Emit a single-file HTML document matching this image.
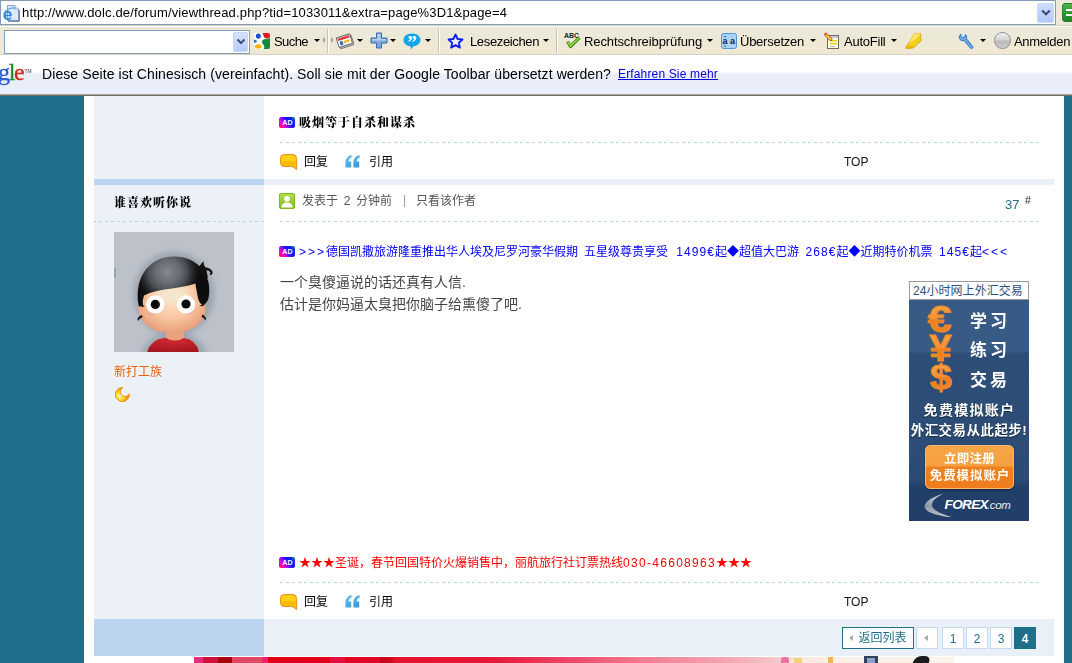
<!DOCTYPE html>
<html lang="zh-CN">
<head>
<meta charset="utf-8">
<title>viewthread</title>
<style>
*{box-sizing:border-box;margin:0;padding:0}
html,body{width:1072px;height:663px;overflow:hidden;background:#fff}
body{position:relative;font-family:"Liberation Sans","Noto Sans CJK SC",sans-serif;font-size:12px;color:#000}
.abs{position:absolute}
.nw{white-space:nowrap}
/* ---------- browser chrome ---------- */
#chrome{position:absolute;left:0;top:0;width:1072px;height:96px;background:#ece9d8;z-index:10}
#addr{position:absolute;left:0;top:0;width:1056px;height:25px;background:#fff;border-top:1px solid #7f9db9;border-bottom:1px solid #7f9db9;border-right:1px solid #7f9db9;border-left:1px solid #7f9db9}
#url{position:absolute;left:21px;top:4px;letter-spacing:0.148px;font-size:13px;line-height:16px;color:#000;white-space:nowrap}
#tb{position:absolute;left:0;top:25px;width:1072px;height:30px;background:linear-gradient(#d8d2bd 0,#d8d2bd 1px,#fff 1px,#fff 2px,#ece9d8 2px,#ece9d8 13px,#eee8d5 14px,#efe8d4 29px,#d6d2c2 29px,#d6d2c2 30px)}
.tt{position:absolute;top:9px;font-size:13px;line-height:16px;white-space:nowrap;color:#000}
.dd{position:absolute;top:14px;width:0;height:0;border-left:3px solid transparent;border-right:3px solid transparent;border-top:3px solid #000}
.sep{position:absolute;top:4px;width:2px;height:24px;border-left:1px solid #c5c2b2;border-right:1px solid #fff}
#info{position:absolute;left:0;top:55px;width:1072px;height:41px;background:linear-gradient(#fff 0,#fff 17px,#f3f6fb 18px,#e9eef8 19px,#e9eef8 39px,#aca899 39px,#aca899 40px,#716f64 40px,#716f64 41px)}
/* ---------- page ---------- */
#page{position:absolute;left:0;top:96px;width:1072px;height:567px;background:#fff}
.teal{position:absolute;top:0;height:567px;background:#1f6f8b}
.lc{position:absolute;left:94px;width:170px;background:#ecf1f8}
.dash{position:absolute;height:1px;background:repeating-linear-gradient(90deg,#b4d2ee 0,#b4d2ee 3px,transparent 3px,transparent 6px)}
.t12{position:absolute;font-size:12px;line-height:14px;white-space:nowrap}

.b{letter-spacing:1px;font-weight:900;font-family:"Liberation Serif","Noto Serif CJK SC",serif}
.g{color:#555}
.top{font-size:12px;color:#111}
.pg{position:absolute;top:531px;width:22px;height:22px;border:1px solid #c4d8ef;background:#fff;color:#1f6f8b;font-size:12px;line-height:22px;text-align:center;white-space:nowrap}
.pg.cur{background:#1f6f8b;border-color:#1f6f8b;color:#fff;font-weight:bold}
.la{position:absolute;top:7px;width:0;height:0;border-top:3.5px solid transparent;border-bottom:3.5px solid transparent;border-right:4px solid #aaa}
.sg{display:inline-block;white-space:pre;vertical-align:top;overflow:visible}
.sg.r{text-align:right}
.tt,.t12,#url,#itx,#ilk,#b1,#b2,#logo,.pg,#fx span{will-change:transform}
</style>
</head>
<body>

<svg width="0" height="0" style="position:absolute">
  <defs>
    <linearGradient id="adg" gradientUnits="userSpaceOnUse" x1="0" y1="11" x2="13" y2="1"><stop offset="0" stop-color="#ff0030"/><stop offset="0.28" stop-color="#ff00c8"/><stop offset="0.55" stop-color="#5a10ff"/><stop offset="0.75" stop-color="#0a10ff"/><stop offset="1" stop-color="#1030f0"/></linearGradient>
    
    <linearGradient id="repg" x1="0" y1="0" x2="0" y2="1"><stop offset="0" stop-color="#ffd61e"/><stop offset="1" stop-color="#ffc400"/></linearGradient>
    
    <linearGradient id="quog" x1="0" y1="0" x2="1" y2="1"><stop offset="0" stop-color="#6cc0f0"/><stop offset="1" stop-color="#2f97dc"/></linearGradient>
    <linearGradient id="usrg" x1="0" y1="0" x2="0" y2="1"><stop offset="0" stop-color="#b4e04c"/><stop offset="1" stop-color="#7fbf1e"/></linearGradient>
    
    <radialGradient id="moong" gradientUnits="userSpaceOnUse" cx="5" cy="9" r="7"><stop offset="0" stop-color="#fff6c8"/><stop offset="0.45" stop-color="#ffe23a"/><stop offset="0.8" stop-color="#ffc21a"/><stop offset="1" stop-color="#f59a10"/></radialGradient>
  </defs>
</svg>
<div id="page">
  <div class="teal" style="left:0;width:84px"></div>
  <div class="teal" style="left:1064px;width:8px"></div>
  <!-- left column backgrounds -->
  <div class="lc" style="top:0;height:83px"></div>
  <div class="abs" style="left:94px;top:83px;width:170px;height:6px;background:#bbd5f1"></div>
  <div class="abs" style="left:264px;top:83px;width:790px;height:6px;background:#eaf0f8"></div>
  <div class="lc" style="top:89px;height:434px"></div>
  <div class="abs" style="left:94px;top:523px;width:170px;height:37px;background:#bbd5f1"></div>
  <div class="abs" style="left:264px;top:523px;width:790px;height:37px;background:#eaf0f8"></div>

  <!-- ============ previous post tail ============ -->
  <svg class="abs adic" style="left:279px;top:21px" width="16" height="11" viewBox="0 0 16 11"><rect x="0" y="0" width="16" height="11" rx="2.5" fill="url(#adg)"/><path d="M15.8 0.4 Q16 2 15.6 3.5 L12.5 0.2 Z" fill="#10a060" opacity="0.7"/><text x="8.4" y="8.3" text-anchor="middle" font-family="Liberation Sans,sans-serif" font-weight="bold" font-size="7" fill="#fff">AD</text></svg>
  <span class="t12 b" id="p1" style="left:299px;top:20px">吸烟等于自杀和谋杀</span>
  <div class="dash" style="left:280px;top:46px;width:759px"></div>
  <svg class="abs" style="left:279.5px;top:57.5px" width="18" height="16" viewBox="0 0 18 16"><path d="M5 0.6 H12 Q16.5 0.6 16.5 5 V15.2 L12.6 12.4 H5 Q0.6 12.4 0.6 8 V5 Q0.6 0.6 5 0.6 Z" fill="url(#repg)" stroke="#f5941d" stroke-width="1.2" stroke-linejoin="round"/><path d="M2 7.2 H15.4 V8 Q15.4 11.2 12 11.2 H5 Q2 11.2 2 8 Z" fill="#f7b400" opacity="0.75"/></svg>
  <span class="t12" id="r1" style="left:304px;top:59px">回复</span>
  <svg class="abs" style="left:345px;top:59px" width="15" height="13" viewBox="0 0 15 13"><path d="M6.6 0 C2.8 0.8 0.4 3.8 0.4 7.4 V12.5 H6.2 V6.6 H3.6 C3.7 4.6 4.8 3.2 6.6 2.6 Z M14.6 0 C10.8 0.8 8.4 3.8 8.4 7.4 V12.5 H14.2 V6.6 H11.6 C11.7 4.6 12.8 3.2 14.6 2.6 Z" fill="url(#quog)"/></svg>
  <span class="t12" id="q1" style="left:368.5px;top:59px">引用</span>
  <span class="t12 top" id="top1" style="left:844px;top:59px">TOP</span>

  <!-- ============ post 37 ============ -->
  <span class="t12 b" id="un" style="left:114px;top:100px">谁喜欢听你说</span>
  <div class="dash" style="left:94px;top:125px;width:170px;background-position:-1px 0"></div>
  <svg class="abs" style="left:279px;top:97px" width="16" height="16" viewBox="0 0 17 17"><rect x="0.5" y="0.5" width="16" height="16" rx="1.5" fill="url(#usrg)" stroke="#79b31d"/><circle cx="8.5" cy="6.2" r="3" fill="#fff"/><path d="M2.5 15.5 C2.5 11.5 5.5 10 8.5 10 C11.5 10 14.5 11.5 14.5 15.5 Z" fill="#fff"/></svg>
  <span class="t12 g" id="h1" style="left:302px;top:98px;word-spacing:2.35px">发表于 2 分钟前</span>
  <span class="t12" style="left:403px;top:97px;color:#999">|</span>
  <span class="t12 g" id="h2" style="left:416px;top:98px">只看该作者</span>
  <span class="t12" id="n37" style="left:1004.5px;top:102px;color:#1f6f8b;font-size:13px">37</span>
  <span class="t12" id="hash" style="left:1025px;top:99px;font-size:10.5px;line-height:10px;color:#222">#</span>
  <div class="dash" style="left:280px;top:125px;width:759px"></div>

  <svg class="abs adic" style="left:279px;top:150px" width="16" height="11" viewBox="0 0 16 11"><rect x="0" y="0" width="16" height="11" rx="2.5" fill="url(#adg)"/><path d="M15.8 0.4 Q16 2 15.6 3.5 L12.5 0.2 Z" fill="#10a060" opacity="0.7"/><text x="8.4" y="8.3" text-anchor="middle" font-family="Liberation Sans,sans-serif" font-weight="bold" font-size="7" fill="#fff">AD</text></svg>
  <span class="t12" id="ad1" style="left:299px;top:149px;color:#0000ff"><span class="sg" style="width:27px;letter-spacing:2px">&gt;&gt;&gt;</span><span class="sg" style="width:252px">德国凯撒旅游隆重推出华人埃及尼罗河豪华假期</span><span class="sg" style="width:6px"> </span><span class="sg" style="width:84px">五星级尊贵享受</span><span class="sg r" style="width:47px;letter-spacing:1.1px">1499€</span><span class="sg" style="width:84px">起◆超值大巴游</span><span class="sg r" style="width:37.5px;letter-spacing:1.1px">268€</span><span class="sg" style="width:96px">起◆近期特价机票</span><span class="sg r" style="width:37.5px;letter-spacing:1.1px">145€</span><span class="sg" style="width:12px">起</span><span class="sg" style="width:27px;letter-spacing:2px">&lt;&lt;&lt;</span></span>
  <span class="abs nw" id="b1" style="left:280px;top:175px;font-size:14px;line-height:22px;color:#444">一个臭傻逼说的话还真有人信.</span>
  <span class="abs nw" id="b2" style="left:280px;top:196.5px;font-size:14px;line-height:22px;color:#444">估计是你妈逼太臭把你脑子给熏傻了吧.</span>


  <svg class="abs" id="avatar" style="left:114px;top:136px" width="120" height="120" viewBox="0 0 120 120">
    <defs>
      <radialGradient id="face" cx="0.5" cy="0.42" r="0.6"><stop offset="0" stop-color="#fde3c8"/><stop offset="0.55" stop-color="#f9c9a4"/><stop offset="1" stop-color="#e89c78"/></radialGradient>
      <radialGradient id="hairg" gradientUnits="userSpaceOnUse" cx="53.5" cy="40" r="32"><stop offset="0" stop-color="#918b74"/><stop offset="0.07" stop-color="#7f8389"/><stop offset="0.35" stop-color="#6a6e74"/><stop offset="0.6" stop-color="#4c4f54"/><stop offset="0.76" stop-color="#2c2d31"/><stop offset="0.9" stop-color="#151516"/><stop offset="1" stop-color="#0d0d0e"/></radialGradient>
      <radialGradient id="shirt" cx="0.5" cy="0.1" r="0.9"><stop offset="0" stop-color="#d42a32"/><stop offset="1" stop-color="#a3151f"/></radialGradient>
      <filter id="blur4" x="-20%" y="-20%" width="140%" height="140%"><feGaussianBlur stdDeviation="3"/></filter>
      <filter id="blur1"><feGaussianBlur stdDeviation="0.7"/></filter>
      <clipPath id="avc"><rect width="120" height="120"/></clipPath>
    </defs>
    <rect width="120" height="120" fill="#bcc1ca"/>
    <rect x="0" y="36" width="2" height="10" fill="#9aa3b0"/>
    <g clip-path="url(#avc)">
      <!-- soft shadow halo -->
      <g filter="url(#blur4)" opacity="0.55">
        <ellipse cx="60" cy="62" rx="40" ry="42" fill="#7f8894"/>
        <path d="M28 125 Q30 102 60 102 Q90 102 92 125 Z" fill="#7f8894"/>
      </g>
      <!-- shirt -->
      <path d="M33 121 Q36 108 50 106 H70 Q83 108 85 121 Z" fill="url(#shirt)"/>
      <!-- neck -->
      <path d="M52 96 H70 V106 Q61 111 52 106 Z" fill="#e9a27c"/>
      <!-- face -->
      <path d="M24.5 76 C24.5 50 40 40 58 40 C76 40 91.5 50 91.5 76 C91.5 92 76 101 58 101 C40 101 24.5 92 24.5 76 Z" fill="url(#face)"/>
      <ellipse cx="58" cy="62" rx="16" ry="9" fill="#f3ead2" opacity="0.75" filter="url(#blur4)"/>
      <!-- hair -->
      <path d="M24.5 73 C20 44 36 24.4 60 24.4 C83 24.4 98 42 95 63 C94.5 68 93 71 90 72.5 C87 73 85 70 84 66 C83 61 82 56 81.4 51.6 C68 57 44 56 30 63.5 C29 67 28.5 70 28 73 C27 75 25 75 24.5 73 Z" fill="url(#hairg)"/>
      <path d="M84 36 C86 33.5 88 30.5 89.6 29 C89.4 31.5 90 33.5 91.2 35.2 C94 35.6 97.2 36.8 98.4 39.6 C99.2 42.2 97.2 43.8 95.4 42.8 C97 41.8 96.6 39.8 94.6 38.8 C93.8 38.5 93 38.4 92.4 38.6 L94 46 L86 42 Z" fill="#111"/>
      <path d="M27.5 70 C26 74 28 76 30.5 74.5 C29 74 28.5 72 29 70 Z" fill="#111"/>
      <path d="M90.5 69 C92 73 89 75.5 85.5 73.5 C88 73.5 89 71.5 88.5 69 Z" fill="#111"/>
      <path d="M88.5 82.5 C91 84 93.5 87 91 88.5 C91 87 90 85.5 87.5 85 Z" fill="#111"/>
      <path d="M28 83 C25 84 22 87 24.5 89 C24.5 87.5 26 86 28.5 85.5 Z" fill="#111"/>
      <!-- cheeks -->
      <ellipse cx="38" cy="81.5" rx="4" ry="1.8" fill="#f6a9a0" opacity="0.8"/>
      <ellipse cx="76" cy="80.5" rx="4" ry="1.8" fill="#f6a9a0" opacity="0.8"/>
      <!-- eyes -->
      <circle cx="41.3" cy="72.4" r="9.2" fill="#fff" filter="url(#blur1)"/>
      <circle cx="72" cy="72.4" r="9.2" fill="#fff" filter="url(#blur1)"/>
      <circle cx="41.3" cy="72.4" r="4.6" fill="#0c0c0c"/>
      <circle cx="72" cy="72" r="4.6" fill="#0c0c0c"/>
    </g>
  </svg>

  <!-- ============ forex ad ============ -->
  <div class="abs" id="fx" style="left:909px;top:185px;width:120px;height:240px;background:linear-gradient(#375b85 0,#375b85 71px,#2d4e77 72px,#2c4c75 198px,#223f69 206px,#223f69 240px);overflow:hidden;font-family:'Liberation Sans','Noto Sans CJK SC',sans-serif;color:#fff;font-weight:bold">
    <div class="abs nw" style="left:0;top:0;width:120px;height:19px;background:#fff;border:1px solid #9a9a9a;color:#2f4f80;font-weight:normal;font-size:12px;line-height:17px;padding-left:3px;padding-top:1px;letter-spacing:0.05px">24小时网上外汇交易</div>
    <svg class="abs" style="left:0;top:19px" width="120" height="100" viewBox="0 0 120 100">
      <defs><linearGradient id="og" x1="0" y1="0" x2="0" y2="1"><stop offset="0" stop-color="#f7ad4c"/><stop offset="0.5" stop-color="#f39233"/><stop offset="0.52" stop-color="#ee7d1f"/><stop offset="1" stop-color="#ef8a2a"/></linearGradient></defs>
      <text transform="translate(30.5 32) scale(1.16 1)" x="0" y="0" text-anchor="middle" font-family="Liberation Sans,sans-serif" font-weight="bold" font-size="36.5" fill="url(#og)" stroke="#f08a28" stroke-width="1.2">€</text>
      <text transform="translate(31.4 60.7) scale(1.08 1)" x="0" y="0" text-anchor="middle" font-family="Liberation Sans,sans-serif" font-weight="bold" font-size="36.5" fill="url(#og)" stroke="#f08a28" stroke-width="1.2">¥</text>
      <text transform="translate(31.9 89.3) scale(1.1 1)" x="0" y="0" text-anchor="middle" font-family="Liberation Sans,sans-serif" font-weight="bold" font-size="35.5" fill="url(#og)" stroke="#f08a28" stroke-width="1">$</text>
    </svg>
    <span class="abs nw" style="left:61px;top:29px;font-size:17px;line-height:24px;letter-spacing:3px">学习</span>
    <span class="abs nw" style="left:61px;top:58px;font-size:17px;line-height:24px;letter-spacing:3px">练习</span>
    <span class="abs nw" style="left:61px;top:88px;font-size:17px;line-height:24px;letter-spacing:3px">交易</span>
    <span class="abs nw" style="left:0;width:120px;text-align:center;top:120px;font-size:14px;line-height:18px;letter-spacing:1.3px;padding-left:1px;text-shadow:0 1px 1px rgba(0,0,0,.5)">免费模拟账户</span>
    <span class="abs nw" style="left:0;width:120px;text-align:center;top:141px;font-size:13.5px;line-height:18px;letter-spacing:0.45px;text-shadow:0 1px 1px rgba(0,0,0,.5)">外汇交易从此起步!</span>
    <div class="abs" style="left:16px;top:164px;width:89px;height:44px;border-radius:5px;border:1px solid #f6b878;background:linear-gradient(#f6a546 0,#f5a040 20px,#f0801f 21px,#ef7d1c 100%);box-shadow:0 1px 2px rgba(0,0,0,.4)">
      <span class="abs nw" style="left:0;width:87px;text-align:center;top:5px;font-size:12.5px;line-height:16px;letter-spacing:0.3px">立即注册</span>
      <span class="abs nw" style="left:0;width:87px;text-align:center;top:22px;font-size:12.5px;line-height:16px;letter-spacing:0.9px;padding-left:1px">免费模拟账户</span>
    </div>
    <svg class="abs" style="left:14px;top:208px" width="92" height="28" viewBox="0 0 92 28">
      <defs><linearGradient id="sw" x1="0" y1="0" x2="0" y2="1"><stop offset="0" stop-color="#d0d4da"/><stop offset="0.5" stop-color="#8e97a4"/><stop offset="1" stop-color="#c4c9d0"/></linearGradient></defs>
      <path d="M20 5 C8 8 0 14 2 19 C4 24 16 27 32 29 C18 25 9 21 9 16 C9 12 13 8 20 5 Z" fill="url(#sw)"/>
      <text x="21.5" y="19.8" font-family="Liberation Sans,sans-serif" font-weight="bold" font-style="italic" font-size="13.5" letter-spacing="-0.6" fill="#fff">FOREX</text>
      <text x="64" y="19.8" font-family="Liberation Sans,sans-serif" font-style="italic" font-weight="normal" font-size="11.5" letter-spacing="-0.4" fill="#e8ecf2">.com</text>
    </svg>
  </div>
  <span class="t12" id="rank" style="left:114px;top:268.5px;color:#ee6208">新打工族</span>
  <svg class="abs" style="left:115px;top:290.5px" width="15" height="15" viewBox="0 0 15 15"><path d="M7.7 0.6 A7 7 0 1 0 14.3 7 A4.8 4.8 0 1 1 7.7 0.6 Z" fill="url(#moong)" stroke="#f08a0c" stroke-width="1" stroke-linejoin="round"/></svg>

  <svg class="abs adic" style="left:279px;top:461px" width="16" height="11" viewBox="0 0 16 11"><rect x="0" y="0" width="16" height="11" rx="2.5" fill="url(#adg)"/><path d="M15.8 0.4 Q16 2 15.6 3.5 L12.5 0.2 Z" fill="#10a060" opacity="0.7"/><text x="8.4" y="8.3" text-anchor="middle" font-family="Liberation Sans,sans-serif" font-weight="bold" font-size="7" fill="#fff">AD</text></svg>
  <span class="t12" id="ad2" style="left:299px;top:460px;color:#ff0000"><span class="sg" style="width:216px">★★★圣诞，春节回国特价火爆销售中，</span><span class="sg" style="width:108px">丽航旅行社订票热线</span><span class="sg" style="width:93px;letter-spacing:1.3px">030-46608963</span><span class="sg" style="width:36px">★★★</span></span>
  <div class="dash" style="left:280px;top:486px;width:759px"></div>
  <svg class="abs" style="left:279.5px;top:497.5px" width="18" height="16" viewBox="0 0 18 16"><path d="M5 0.6 H12 Q16.5 0.6 16.5 5 V15.2 L12.6 12.4 H5 Q0.6 12.4 0.6 8 V5 Q0.6 0.6 5 0.6 Z" fill="url(#repg)" stroke="#f5941d" stroke-width="1.2" stroke-linejoin="round"/><path d="M2 7.2 H15.4 V8 Q15.4 11.2 12 11.2 H5 Q2 11.2 2 8 Z" fill="#f7b400" opacity="0.75"/></svg>
  <span class="t12" id="r2" style="left:304px;top:499px">回复</span>
  <svg class="abs" style="left:345px;top:499px" width="15" height="13" viewBox="0 0 15 13"><path d="M6.6 0 C2.8 0.8 0.4 3.8 0.4 7.4 V12.5 H6.2 V6.6 H3.6 C3.7 4.6 4.8 3.2 6.6 2.6 Z M14.6 0 C10.8 0.8 8.4 3.8 8.4 7.4 V12.5 H14.2 V6.6 H11.6 C11.7 4.6 12.8 3.2 14.6 2.6 Z" fill="url(#quog)"/></svg>
  <span class="t12" id="q2" style="left:368.5px;top:499px">引用</span>
  <span class="t12 top" id="top2" style="left:844px;top:499px">TOP</span>


  <!-- bottom banner strip -->
  <div class="abs" style="left:194px;top:561px;width:760px;height:6px;background:linear-gradient(90deg,#e62c7c 0,#e62c7c 9px,#d01040 9px,#cc1038 24px,#a80010 24px,#a60010 38px,#de4464 38px,#e04a68 68px,#f02070 68px,#f02070 74px,#e00018 74px,#e2001c 136px,#e01040 136px,#e01040 151px,#e10520 151px,#e00a24 186px,#c80418 186px,#cc0a20 198px,#e3122c 200px,#e6183a 300px,#ee4a6c 380px,#f17d93 450px,#f6a9b6 540px,#f5c8cc 586px,#fae6e0 600px,#fbf0e8 650px,#fbf3ea 760px)"></div>
  <div class="abs" style="left:781px;top:561px;width:8px;height:6px;background:#e874a2;border-radius:3px 3px 0 0"></div>
  <div class="abs" style="left:794px;top:562px;width:8px;height:5px;background:#f3c74a;opacity:.7"></div>
  <div class="abs" style="left:828px;top:561px;width:5px;height:6px;background:#e9a52e;opacity:.8"></div>
  <div class="abs" style="left:864px;top:560px;width:14px;height:7px;background:#33415f"></div>
  <div class="abs" style="left:867px;top:562px;width:8px;height:5px;background:#8aa0c8"></div>
  <div class="abs" style="left:914px;top:560px;width:16px;height:7px;background:#1b1b1f;border-radius:6px 6px 0 0;transform:skewX(-20deg)"></div>
  <!-- ============ pagination ============ -->
  <div class="pg" style="left:842px;width:72px;border-color:#1f6f8b;color:#1f6f8b"><i class="la" style="left:6px"></i><span id="back" style="position:absolute;left:15.5px;top:0;line-height:21px">返回列表</span></div>
  <div class="pg" style="left:916px"><i class="la" style="left:7px"></i></div>
  <div class="pg" style="left:942px">1</div>
  <div class="pg" style="left:966px">2</div>
  <div class="pg" style="left:990px">3</div>
  <div class="pg cur" style="left:1014px">4</div>
</div>
<div id="chrome">
  <div id="addr">
    <svg class="abs" style="left:2px;top:4px" width="17" height="17" viewBox="0 0 17 17">
      <path d="M4.5 0.5 H12 L15.5 4 V15.5 H4.5 Z" fill="#dfe8fa" stroke="#8aa2cf"/>
      <path d="M12 0.5 V4 H15.5" fill="#fff" stroke="#8aa2cf"/>
      <path d="M5 16.3 H16.3 V5" fill="none" stroke="#5a6c93" stroke-width="1"/>
      <text x="-0.3" y="14.6" font-family="Liberation Sans,sans-serif" font-weight="bold" font-size="17" fill="#2b86e0">e</text>
      <path d="M0.8 9 C3 4 9.5 1.8 12.5 3.4" fill="none" stroke="#4aa3ee" stroke-width="1.3"/>
    </svg>
    <div class="abs" style="left:1036px;top:2px;width:17px;height:20px;background:linear-gradient(#cddcfb,#b4c9f6);border-radius:2px;border:1px solid #c9d8fb"></div>
    <svg class="abs" style="left:1040px;top:8px" width="10" height="8" viewBox="0 0 10 8"><path d="M1.2 1.5 L5 5.3 L8.8 1.5" fill="none" stroke="#34497c" stroke-width="2"/></svg>
<span id="url">http://www.dolc.de/forum/viewthread.php?tid=1033011&amp;extra=page%3D1&amp;page=4</span></div>
  <div class="abs" style="left:1062px;top:3px;width:14px;height:19px;border-radius:3px 0 0 3px;border:1px solid #2d7a2d;background:linear-gradient(#4db34d,#2f9a35 50%,#1f8428)"></div>
  <div class="abs" style="left:1066px;top:9px;width:6px;height:2px;background:#fff"></div>
  <div class="abs" style="left:1066px;top:14px;width:6px;height:2px;background:#fff"></div>
  <div id="tb">
    <div class="abs" style="left:4px;top:5px;width:246px;height:24px;background:#fff;border:1px solid #7f9db9"></div>
    <div class="abs" style="left:233px;top:7px;width:15px;height:20px;background:linear-gradient(#d5e1fb,#b8cdf7);border-radius:2px;border:1px solid #c6d6fa"></div>
    <svg class="abs" style="left:236px;top:13px" width="10" height="8" viewBox="0 0 10 8"><path d="M1.5 1.5 L5 5 L8.5 1.5" fill="none" stroke="#3c4f7c" stroke-width="2"/></svg>
    <!-- google g icon -->
    <svg class="abs" style="left:254px;top:8px" width="16" height="16" viewBox="0 0 16 16">
      <rect x="0" y="0" width="16" height="16" rx="2" fill="#fff"/>
      <ellipse cx="4.3" cy="3.1" rx="2.5" ry="2.6" fill="#1450d0"/>
      <path d="M8.4 0 H14 Q16 0 16 2 V4.6 L12.2 5.6 Q10.2 5 9.6 3.2 Q9.4 1.4 8.4 0 Z" fill="#e8141c"/>
      <path d="M16 5 V14 Q16 16 14 16 H9.6 Q11 13.5 9.4 11.6 Q7.4 9.8 8.2 7.6 Q9.4 5.8 12.4 6 Z" fill="#128a38"/>
      <ellipse cx="4.2" cy="13.4" rx="3.4" ry="2.2" fill="#f6b400"/>
      <path d="M0 6.2 L3.6 8.2 L0 10.2 Z" fill="#2a6ad0"/>
    </svg>
    <span class="tt" id="t1" style="left:274px;letter-spacing:-0.58px">Suche</span>
    <i class="dd" style="left:314px"></i>
    <div class="sep" style="left:327px"></div>
    <i class="abs" style="left:322px;top:12px;border-top:3px solid transparent;border-bottom:3px solid transparent;border-right:3px solid #aaa79a"></i>
    <i class="abs" style="left:331px;top:12px;border-top:3px solid transparent;border-bottom:3px solid transparent;border-left:3px solid #aaa79a"></i>
    <!-- news icon -->
    <svg class="abs" style="left:336px;top:7px" width="18" height="18" viewBox="0 0 18 18">
      <g transform="rotate(-18 9 9)">
        <rect x="2.5" y="5" width="14" height="10" rx="1" fill="#d8d8d8" stroke="#777" stroke-width="1"/>
        <rect x="1.5" y="3.5" width="14" height="10" rx="1" fill="#fff" stroke="#666" stroke-width="1"/>
        <rect x="2.5" y="4.5" width="12" height="2.5" fill="#e0393e"/>
        <rect x="3.5" y="8" width="3" height="4" fill="#3465c9"/>
        <rect x="7.5" y="8.5" width="6" height="2.5" fill="#f5b921"/>
      </g>
    </svg>
    <i class="dd" style="left:357px"></i>
    <!-- plus -->
    <svg class="abs" style="left:370px;top:7px" width="18" height="17" viewBox="0 0 18 17">
      <path d="M6.5 1 H11.5 V6 H17 V11 H11.5 V16 H6.5 V11 H1 V6 H6.5 Z" fill="#7fa9dc" stroke="#3b68a8" stroke-width="1" stroke-linejoin="round"/>
      <path d="M7.5 2 H10.5 V7 H16 V8.5 H2 V7 H7.5 Z" fill="#b5d0f0"/>
    </svg>
    <i class="dd" style="left:390px"></i>
    <!-- bubble -->
    <svg class="abs" style="left:403px;top:8px" width="18" height="17" viewBox="0 0 18 17">
      <path d="M9 0.5 C14 0.5 17.5 3.3 17.5 7 C17.5 10.5 14 13 10.5 13.3 L8 16.5 L7.5 13.3 C3.5 13 0.5 10.5 0.5 7 C0.5 3.3 4 0.5 9 0.5 Z" fill="#13a4ee"/>
      <text x="9" y="16.2" font-family="Liberation Serif,serif" font-weight="bold" font-size="19" fill="#fff" text-anchor="middle">”</text>
    </svg>
    <i class="dd" style="left:425px"></i>
    <div class="sep" style="left:438px"></div>
    <!-- star -->
    <svg class="abs" style="left:447px;top:8px" width="17" height="16" viewBox="0 0 17 16">
      <path d="M8.5 1.5 L10.6 6 L15.5 6.5 L11.8 9.8 L12.9 14.6 L8.5 12.1 L4.1 14.6 L5.2 9.8 L1.5 6.5 L6.4 6 Z" fill="#e8eeff" stroke="#0a1cf0" stroke-width="1.8" stroke-linejoin="round"/>
    </svg>
    <span class="tt" id="t2" style="left:470px;letter-spacing:-0.36px">Lesezeichen</span>
    <i class="dd" style="left:543px"></i>
    <div class="sep" style="left:556px"></div>
    <!-- ABC check -->
    <svg class="abs" style="left:564px;top:7px" width="18" height="17" viewBox="0 0 18 17">
      <text x="0" y="6" font-family="Liberation Sans,sans-serif" font-weight="bold" font-size="7" fill="#222">ABC</text>
      <path d="M3.5 9.5 L6.5 14.5 L15.5 5.5" fill="none" stroke="#4b8a1c" stroke-width="3.2" stroke-linejoin="round"/>
      <path d="M3.8 9.8 L6.6 14 L15.2 5.8" fill="none" stroke="#9ad94a" stroke-width="1.4"/>
    </svg>
    <span class="tt" id="t3" style="left:584px;letter-spacing:-0.1px">Rechtschreibprüfung</span>
    <i class="dd" style="left:707px"></i>
    <!-- translate icon -->
    <svg class="abs" style="left:721px;top:8px" width="16" height="16" viewBox="0 0 16 16">
      <rect x="0.5" y="0.5" width="15" height="15" rx="2" fill="#aad3f7" stroke="#4d97d8"/>
      <text x="1.5" y="11" font-family="Liberation Sans,sans-serif" font-weight="bold" font-size="9" fill="#123">a</text>
      <text x="9" y="11" font-family="Liberation Sans,sans-serif" font-weight="bold" font-size="9" fill="#123">a</text>
      <rect x="3.5" y="3" width="1.2" height="1.2" fill="#123"/><rect x="3.5" y="12.5" width="1.2" height="1.2" fill="#123"/>
    </svg>
    <span class="tt" id="t4" style="left:740px;letter-spacing:-0.25px">Übersetzen</span>
    <i class="dd" style="left:810px"></i>
    <!-- autofill -->
    <svg class="abs" style="left:823px;top:7px" width="18" height="18" viewBox="0 0 18 18">
      <rect x="4.5" y="3.5" width="11" height="13" fill="#fffbe6" stroke="#6b6b6b"/>
      <rect x="5" y="4" width="10" height="2" fill="#c9c9c9"/>
      <rect x="7" y="8" width="7" height="1.6" fill="#f2d21c"/><rect x="7" y="11" width="7" height="1.6" fill="#f2d21c"/><rect x="7" y="14" width="5" height="1" fill="#bbb"/>
      <path d="M1 2.5 L3 0.8 L9 6.5 L8.8 8.6 L6.8 8.4 Z" fill="#f5c63a" stroke="#a0522d" stroke-width="0.8"/>
      <path d="M1 2.5 L3 0.8 L4.2 2 L2.2 3.7 Z" fill="#e5533d"/>
    </svg>
    <span class="tt" id="t5" style="left:844px;letter-spacing:-0.24px">AutoFill</span>
    <i class="dd" style="left:891px"></i>
    <!-- highlighter -->
    <svg class="abs" style="left:905px;top:8px" width="17" height="16" viewBox="0 0 17 16">
      <path d="M9 1 L15.5 0.5 L16 8 L8 15 L1 15.5 L0.8 13.5 L4 10 Z" fill="#f4cf1b" stroke="#d1a500" stroke-width="0.8" stroke-linejoin="round"/>
      <path d="M9 1 L15.5 0.5 L11 6 L4 10 Z" fill="#fbe56a"/>
      <path d="M1 13.8 L8 13 L8 15 L1 15.5 Z" fill="#e3b400"/>
    </svg>
    <!-- wrench -->
    <svg class="abs" style="left:958px;top:8px" width="17" height="17" viewBox="0 0 17 17">
      <path d="M3 1.2 C1.2 2.2 0.6 4.6 2 6.4 C3 7.6 4.6 7.9 6 7.4 L12.6 15.2 C13.6 16.3 15.6 15 14.8 13.6 L8.4 5.6 C9 4.2 8.6 2.4 7.4 1.4 L6.6 4.2 L4.4 4.6 L3 3.2 Z" fill="#6fa8e6" stroke="#2f6fc0" stroke-width="1" stroke-linejoin="round"/>
    </svg>
    <i class="dd" style="left:980px"></i>
    <!-- circle -->
    <div class="abs" style="left:994px;top:7px;width:17px;height:17px;border-radius:50%;border:1px solid #8d8d8d;background:linear-gradient(#f4f4f4,#d5d5d5 45%,#b9b9b9 55%,#cfcfcf)"></div>
    <span class="tt" id="t6" style="left:1014px;letter-spacing:-0.31px">Anmelden</span>
  </div>
  <div id="info">
    <span class="abs nw" id="logo" style="left:-2.5px;top:3px;font-family:'Liberation Serif',serif;font-size:24px;line-height:28px;letter-spacing:-1.3px;-webkit-text-stroke:0.35px currentColor"><span style="color:#2a5bd0;-webkit-text-stroke-color:#2a5bd0">g</span><span style="color:#1a8f2e;-webkit-text-stroke-color:#1a8f2e">l</span><span style="color:#d02a1e;-webkit-text-stroke-color:#d02a1e">e</span></span>
    <span class="abs nw" style="left:24.5px;top:13px;font-size:5px;line-height:6px;color:#777;font-weight:bold">TM</span>
    <span class="abs nw" id="itx" style="left:42px;top:11px;letter-spacing:0.09px;font-size:14px;line-height:16px;color:#000">Diese Seite ist Chinesisch (vereinfacht). Soll sie mit der Google Toolbar übersetzt werden?</span>
    <span class="abs nw" id="ilk" style="left:618px;top:12px;letter-spacing:0.15px;font-size:12px;line-height:15px;color:#0000e0;text-decoration:underline">Erfahren Sie mehr</span>
  </div>
</div>
</body>
</html>
